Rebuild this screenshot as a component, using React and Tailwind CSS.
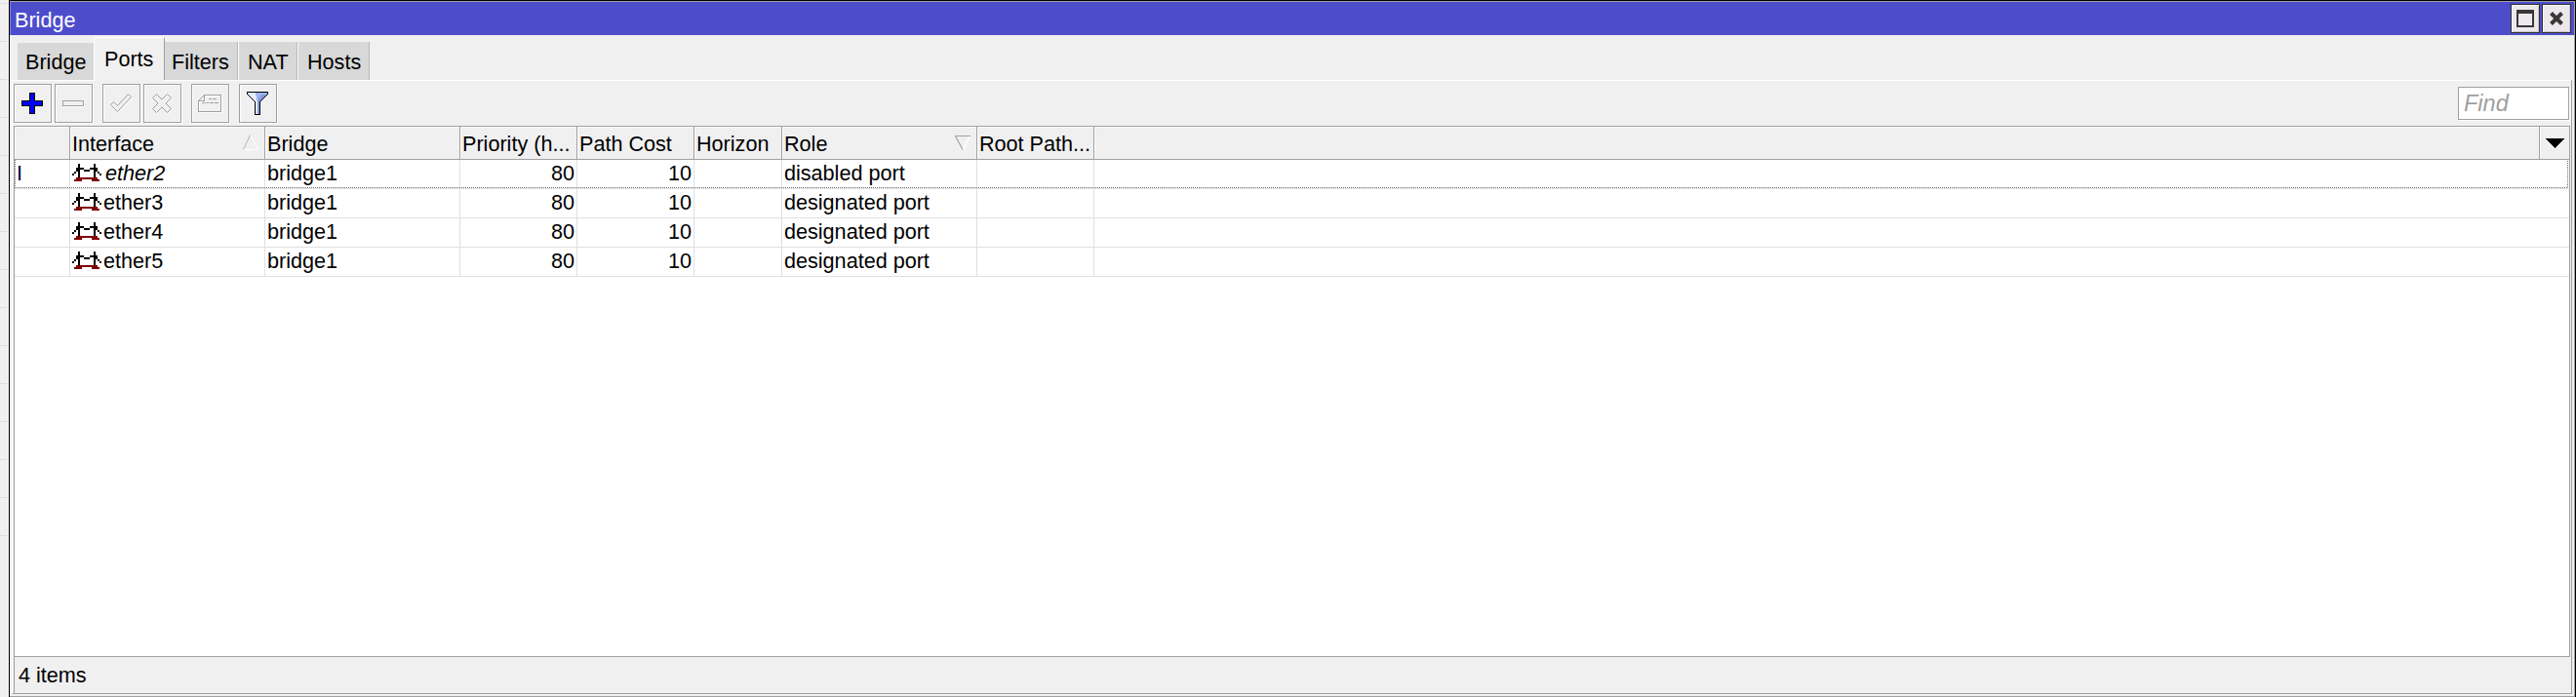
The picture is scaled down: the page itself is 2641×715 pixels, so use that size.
import React from "react";

const COLUMNS = [
  { label: "", cls: "w-[57px]" },
  { label: "Interface", cls: "w-[200px]", sort: "up" },
  { label: "Bridge", cls: "w-[200px]" },
  { label: "Priority (h...", cls: "w-[120px]" },
  { label: "Path Cost", cls: "w-[120px]" },
  { label: "Horizon", cls: "w-[90px]" },
  { label: "Role", cls: "w-[200px]", sort: "down" },
  { label: "Root Path...", cls: "w-[120px]" },
];

const ROWS = [
  { flag: "I", name: "ether2", role: "disabled port", focused: true },
  { flag: "", name: "ether3", role: "designated port" },
  { flag: "", name: "ether4", role: "designated port" },
  { flag: "", name: "ether5", role: "designated port" },
];

const TABS = [
  { label: "Filters", cls: "w-[75px] border-r border-[#b8b8b8] pl-[7px]" },
  { label: "NAT", cls: "w-[61px] border-l border-l-white border-r border-r-[#b8b8b8] pl-[9px]" },
  { label: "Hosts", cls: "w-[74px] border-l border-l-white border-r border-r-[#b8b8b8] pl-[9px]" },
];

const TICKS = Array.from({ length: 15 }, (_, i) => i);

function PlusIcon() {
  return (
    <svg width="23" height="22" viewBox="0 0 23 22" shapeRendering="crispEdges">
      <path d="M8.500 .5h5v8h8v5h-8v8h-5v-8h-8v-5h8z" fill="#0000ff" stroke="#000" />
    </svg>
  );
}

function MinusIcon() {
  return (
    <svg width="23" height="7" viewBox="0 0 23 7" shapeRendering="crispEdges">
      <path d="M1.500 1.500h21v5h-21z" fill="none" stroke="#fff" />
      <path d="M.5 .5h21v5h-21z" fill="#f0f0f0" stroke="#a0a0a0" />
    </svg>
  );
}

function CheckIcon() {
  const d = "M.5 11.500l3-3 4 4 11-12 3 3-14 15z";
  return (
    <svg width="23" height="20" viewBox="0 0 23 20">
      <path d={d} transform="translate(1 1)" fill="none" stroke="#fff" />
      <path d={d} fill="#f0f0f0" stroke="#a0a0a0" />
    </svg>
  );
}

function CrossIcon() {
  const d = "M4.500 .5l5.500 5.500 5.500-5.500 4 4-5.500 5.500 5.500 5.500-4 4-5.500-5.500-5.500 5.500-4-4 5.500-5.500-5.500-5.500z";
  return (
    <svg width="21" height="21" viewBox="0 0 21 21">
      <path d={d} transform="translate(1 1)" fill="none" stroke="#fff" />
      <path d={d} fill="#f0f0f0" stroke="#a0a0a0" />
    </svg>
  );
}

function CommentIcon() {
  const d = "M6.500 .5h17v17h-23v-11l6-6v6h-6";
  return (
    <svg width="25" height="19" viewBox="0 0 25 19" shapeRendering="crispEdges">
      <path d={d} transform="translate(1 1)" fill="none" stroke="#fff" />
      <path d={d} fill="none" stroke="#a0a0a0" />
      <path d="M11 4.500h3M15 4.500h4M4 8.500h4M9 8.500h2M12 8.500h4M17 8.500h4" stroke="#a0a0a0" />
    </svg>
  );
}

function FunnelIcon() {
  return (
    <svg width="23" height="24" viewBox="0 0 23 24" shapeRendering="crispEdges">
      <path d="M.5 .5h21v2l-8 8v13h-5v-13l-8-8z" fill="#9fb4ec" />
      <path d="M1 1h8l2 10v12h-2v-13l-8-7z" fill="#e4ebfc" />
      <path d="M15 3h5l-7 7v13h-2v-13z" fill="#8299dc" />
      <path d="M.5 .5h21v2l-8 8v13h-5v-13l-8-8z" fill="none" stroke="#000" />
    </svg>
  );
}

function BridgeIcon() {
  return (
    <svg className="shrink-0" width="30" height="18" viewBox="0 0 30 18" shapeRendering="crispEdges">
      <path
        d="M6 0h2v14h-2zM22 0h2v14h-2zM4 4h8v2h-8zM18 4h8v2h-8zM4 6h2v2h-2zM24 6h2v2h-2zM2 8h2v2h-2zM26 8h2v2h-2zM0 10h2v2h-2zM28 10h2v2h-2zM12 6h6v2h-6z"
        fill="#000"
      />
      <path d="M4 14h22v2h-22zM2 16h8v2h-8zM20 16h8v2h-8z" fill="#800000" />
    </svg>
  );
}

function SortMark({ dir }) {
  return (
    <svg width="17" height="17" viewBox="0 0 17 17" className="mr-[5px] mb-[5px]">
      {dir === "up" ? (
        <>
          <path d="M8 .5L15.500 15.500H1" stroke="#fff" fill="none" />
          <path d="M.5 15.500L7.500 .5" stroke="#c0c0c0" fill="none" strokeWidth="1.200" />
        </>
      ) : (
        <>
          <path d="M15.500 1L8.500 15" stroke="#fff" fill="none" strokeWidth="1.500" />
          <path d="M16 1.500H.5L8 15.500" stroke="#a0a0a0" fill="none" strokeWidth="1.200" />
        </>
      )}
    </svg>
  );
}

function ToolButton({ children, className = "" }) {
  return (
    <div
      className={`flex h-10 w-[39px] items-center justify-center border border-[#a0a0a0] shadow-[inset_1px_1px_0_#fff,1px_1px_0_#fff] ${className}`}
    >
      {children}
    </div>
  );
}

function Cell({ cls, children }) {
  return <div className={`h-full shrink-0 border-r border-[#e0e0e0] leading-[28px] ${cls}`}>{children}</div>;
}

function Row({ row }) {
  return (
    <div className="relative flex h-[30px] shrink-0 border-b border-[#e0e0e0]">
      <Cell cls="w-[57px] pl-[2px] text-[#000040]">{row.flag}</Cell>
      <Cell cls="w-[200px]">
        <div className="flex pl-[2px]">
          <div className="pt-[4px]"><BridgeIcon /></div>
          <span className={row.focused ? "ml-[4px] italic" : "ml-[2px]"}>{row.name}</span>
        </div>
      </Cell>
      <Cell cls="w-[200px] pl-[2px]">bridge1</Cell>
      <Cell cls="w-[120px] pr-[2px] text-right">80</Cell>
      <Cell cls="w-[120px] pr-[2px] text-right">10</Cell>
      <Cell cls="w-[90px]" />
      <Cell cls="w-[200px] pl-[2px]">{row.role}</Cell>
      <Cell cls="w-[120px]" />
      {row.focused && (
        <div className="absolute top-0 left-0">
          <svg width="2618" height="29" shapeRendering="crispEdges">
            <path d="M.5 0V28.500H2617.500V0" fill="none" stroke="#707068" strokeDasharray="1 1" />
          </svg>
        </div>
      )}
    </div>
  );
}

export default function App() {
  return (
    <div className="flex h-[715px] w-[2641px] overflow-hidden bg-[#f0f0f0] font-['Liberation_Sans',Arial,sans-serif] text-[21.600px] text-black">
      <div className="w-[9px] shrink-0 pt-[3px]">
        {TICKS.map((i) => (
          <div key={i} className="h-[39px] w-[7px] border-t border-[#dcdcdc]" />
        ))}
      </div>

      <div className="flex w-[2632px] flex-col border-x border-t border-black">
        <div className="flex h-[714px] flex-col border-t border-r border-b border-[#a0a0a0]">
          <div className="flex h-[34px] shrink-0 items-center justify-between border-l border-[#8484dc] bg-[#4d4dcc] pr-[3px] pl-[4px] text-white">
            <span className="pt-[4px]">Bridge</span>
            <div className="flex gap-[2px]">
              <div className="flex size-[30px] items-center justify-center border border-[#303030] bg-[#ece8ec] shadow-[inset_1px_1px_0_#fff,inset_-1px_-1px_0_#c8c4c8]">
                <svg width="18" height="18" viewBox="0 0 18 18" shapeRendering="crispEdges">
                  <path d="M0 0h18v18H0zM2 4v12h14V4z" fillRule="evenodd" fill="#383838" />
                </svg>
              </div>
              <div className="flex size-[30px] items-center justify-center border border-[#303030] bg-[#ece8ec] shadow-[inset_1px_1px_0_#fff,inset_-1px_-1px_0_#c8c4c8]">
                <svg width="14" height="14" viewBox="0 0 14 14">
                  <path d="M1.500 1.500l11 11M12.500 1.500l-11 11" stroke="#383838" strokeWidth="4" />
                </svg>
              </div>
            </div>
          </div>

          <div className="flex h-[46px] shrink-0 items-end pl-[8px]">
            <div className="h-[38px] w-[78px] bg-[#d8d8d8] pl-[8px] leading-[40px]">Bridge</div>
            <div className="h-[44px] w-[73px] border-t border-r border-l border-white border-r-[#a0a0a0] pl-[10px] leading-[44px]">Ports</div>
            {TABS.map((t) => (
              <div key={t.label} className={`h-[39px] bg-[#d8d8d8] leading-[41px] ${t.cls}`}>
                {t.label}
              </div>
            ))}
          </div>

          <div className="mr-[2px] ml-[2px] flex h-[630px] flex-col border-r border-b border-l border-[#a0a0a0] border-l-white">
            <div className="flex shrink-0">
              <div className="h-px w-[84px] bg-white" />
              <div className="h-px w-[72px]" />
              <div className="h-px grow bg-white" />
            </div>
            <div className="flex h-[46px] shrink-0 items-start pt-[3px] pr-[2px] pl-px">
              <ToolButton><PlusIcon /></ToolButton>
              <ToolButton className="ml-[3px]"><MinusIcon /></ToolButton>
              <ToolButton className="ml-[10px]"><CheckIcon /></ToolButton>
              <ToolButton className="ml-[3px]"><CrossIcon /></ToolButton>
              <ToolButton className="ml-[10px]"><CommentIcon /></ToolButton>
              <ToolButton className="ml-[10px]"><FunnelIcon /></ToolButton>
              <div className="mt-[3px] ml-auto h-[34px] w-[114px] border border-[#a0a0a0] bg-white pl-[5px] text-[23.500px] leading-[33px] text-[#a0a0a0] italic shadow-[1px_1px_0_#fff]">
                Find
              </div>
            </div>

            <div className="mr-px ml-px flex h-[545px] shrink-0 flex-col border border-[#a0a0a0] bg-white">
              <div className="flex h-[34px] shrink-0 border-b border-[#a0a0a0] bg-[#f0f0f0]">
                {COLUMNS.map((c, i) => (
                  <div
                    key={i}
                    className={`flex h-full shrink-0 items-center justify-between border-r border-[#a0a0a0] pt-[4px] pl-[2px] whitespace-nowrap shadow-[inset_1px_1px_0_#fff] ${c.cls}`}
                  >
                    <span>{c.label}</span>
                    {c.sort && <SortMark dir={c.sort} />}
                  </div>
                ))}
                <div className="grow border-r border-[#a0a0a0] shadow-[inset_1px_1px_0_#fff]" />
                <div className="flex w-[30px] items-center justify-center shadow-[inset_1px_1px_0_#fff]">
                  <svg width="20" height="10" viewBox="0 0 20 10" shapeRendering="crispEdges">
                    <path d="M0 0h20L10 10z" fill="#000" />
                  </svg>
                </div>
              </div>
              {ROWS.map((r) => (
                <Row key={r.name} row={r} />
              ))}
            </div>
            <div className="ml-px flex grow items-center border-l border-[#a0a0a0] pt-[2px] pl-[4px]">4 items</div>
          </div>
        </div>
      </div>
    </div>
  );
}
